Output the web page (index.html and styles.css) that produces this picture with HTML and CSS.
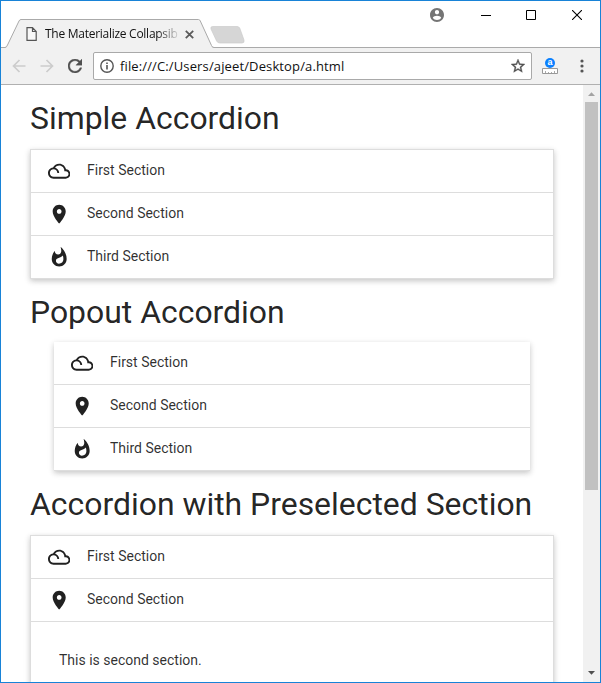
FILE: index.html
```html
<!DOCTYPE html>
<html lang="en">
<head>
<meta charset="utf-8">
<title>The Materialize Collapsible</title>
<link rel="stylesheet" href="styles.css">
</head>
<body>
<svg class="sprites" aria-hidden="true">
  <symbol id="cloud" viewBox="0 0 24 24"><path d="M19.35 10.04C18.67 6.59 15.64 4 12 4 9.11 4 6.61 5.64 5.36 8.04 2.35 8.36 0 10.9 0 14c0 3.31 2.69 6 6 6h13c2.76 0 5-2.24 5-5 0-2.64-2.05-4.78-4.65-4.96zM19 18H6c-2.21 0-4-1.79-4-4s1.79-4 4-4 4 1.79 4 4h2c0-2.76-1.86-5.08-4.4-5.78C8.61 6.88 10.2 6 12 6c3.03 0 5.5 2.47 5.5 5.5v.5H19c1.65 0 3 1.35 3 3s-1.35 3-3 3z"/></symbol>
  <symbol id="place" viewBox="0 0 24 24"><path d="M12 2C8.13 2 5 5.13 5 9c0 5.25 7 13 7 13s7-7.75 7-13c0-3.87-3.13-7-7-7zm0 9.5c-1.38 0-2.5-1.12-2.5-2.5s1.12-2.5 2.5-2.5 2.5 1.12 2.5 2.5-1.12 2.5-2.5 2.5z"/></symbol>
  <symbol id="hot" viewBox="0 0 24 24"><path d="M13.5.67s.74 2.65.74 4.8c0 2.06-1.35 3.73-3.41 3.73-2.07 0-3.63-1.67-3.63-3.73l.03-.36C5.21 7.51 4 10.62 4 14c0 4.42 3.58 8 8 8s8-3.58 8-8C20 8.61 17.41 3.8 13.5.67zM11.71 19c-1.78 0-3.22-1.4-3.22-3.14 0-1.62 1.05-2.76 2.81-3.12 1.77-.36 3.6-1.21 4.62-2.58.39 1.29.59 2.65.59 4.04 0 2.65-2.15 4.8-4.8 4.8z"/></symbol>
</svg>
<div class="window">
  <header class="tabstrip">
    <div class="tab">
      <svg class="tab-shape" width="245" height="30" viewBox="0 0 245 30"><path d="M0 28.5H5L18.5 1.5Q19 .5 20 .5H197.500Q198.500 .5 199 1.500L211.500 28.500H245V30H0z" fill="#f1f1f1"/><path d="M0 28.500H4Q5.500 28.500 6.500 26L18 2Q18.700 .5 20 .5H197.500Q198.700 .5 199.300 2L210.500 26.500Q211.300 28.500 213 28.500H245" fill="none" stroke="#aaa"/><path d="M211.500 7.500H236Q238 7.500 238.700 9L243 21Q243.700 24 241 24H219Q216.500 24 215.600 22L210 10Q209.300 7.500 211.500 7.500z" fill="#d6d6d6" stroke="#ccc" stroke-width=".7"/></svg>
      <svg class="file-icon" width="11" height="14" viewBox="0 0 11 14"><path d="M1 .7H6.500L10.200 4.500V13.300H1zM6.500 .7V4.500H10.200" fill="#f8f8f8" stroke="#555" stroke-width="1.200"/></svg>
      <span class="tab-title">The Materialize Collapsib</span>
      <svg class="tab-close" width="9" height="9" viewBox="0 0 9 9"><path d="M.8.8 8.200 8.200M8.200.8.8 8.200" stroke="#5a5a5a" stroke-width="1.800"/></svg>
    </div>
    <div class="controls">
      <svg class="user" width="14" height="14" viewBox="2 2 20 20"><path fill="#757575" d="M12 2C6.480 2 2 6.480 2 12s4.480 10 10 10 10-4.480 10-10S17.520 2 12 2zm0 3c1.660 0 3 1.340 3 3s-1.340 3-3 3-3-1.340-3-3 1.340-3 3-3zm0 14.200c-2.500 0-4.710-1.280-6-3.220.03-1.990 4-3.080 6-3.080 1.990 0 5.970 1.090 6 3.080-1.290 1.940-3.500 3.220-6 3.220z"/></svg>
      <svg width="10" height="10" viewBox="0 0 10 10"><path d="M0 5.500H10" stroke="#000"/></svg>
      <svg width="10" height="10" viewBox="0 0 10 10"><path d="M.5.5H9.500V9.500H.5z" fill="none" stroke="#000"/></svg>
      <svg class="close" width="10" height="10" viewBox="0 0 10 10"><path d="M0 0 10 10M10 0 0 10" stroke="#000" stroke-width="1.100"/></svg>
    </div>
  </header>
  <nav class="toolbar">
    <svg class="back" width="14" height="14" viewBox="0 0 14 14"><path d="M13.500 7H1.500M7.500 1 1.500 7 7.500 13" fill="none" stroke="#ccc" stroke-width="1.700"/></svg>
    <svg class="forward" width="14" height="14" viewBox="0 0 14 14"><path d="M.5 7H12.500M6.500 1 12.500 7 6.500 13" fill="none" stroke="#ccc" stroke-width="1.700"/></svg>
    <svg class="reload" width="14" height="14" viewBox="4 4 16 16"><path fill="#505050" stroke="#505050" stroke-width=".4" d="M17.650 6.350C16.200 4.900 14.210 4 12 4c-4.420 0-7.990 3.580-7.990 8s3.570 8 7.990 8c3.730 0 6.840-2.550 7.730-6h-2.080c-.82 2.330-3.040 4-5.650 4-3.310 0-6-2.690-6-6s2.690-6 6-6c1.660 0 3.140.69 4.220 1.780L13 11h7V4l-2.350 2.350z"/></svg>
    <div class="address">
      <svg width="14" height="14" viewBox="0 0 14 14"><circle cx="7" cy="7" r="6.200" fill="none" stroke="#555" stroke-width="1.400"/><path d="M7 6V10.500M7 3.500V5.100" stroke="#555" stroke-width="1.600"/></svg>
      <span class="url">file:///C:/Users/ajeet/Desktop/a.html</span>
      <svg class="star" width="14" height="14" viewBox="2 2 20 20"><path fill="#505050" stroke="#505050" stroke-width=".5" d="M22 9.240l-7.190-.62L12 2 9.190 8.630 2 9.240l5.460 4.730L5.820 21 12 17.270 18.180 21l-1.630-7.030L22 9.240zM12 15.400l-3.760 2.270 1-4.280-3.320-2.880 4.380-.38L12 6.100l1.710 4.040 4.380.38-3.320 2.880 1 4.280L12 15.400z"/></svg>
    </div>
    <div class="extension"><span class="badge">a</span><svg width="16" height="6" viewBox="0 0 16 6"><path d="M.5.5H15.500V5.500H.5z" fill="#fff" stroke="#999"/><path d="M3.500 3V5M6.500 4V5M9.500 4V5M12.500 3V5" stroke="#aaa"/></svg></div>
    <svg class="menu" width="4" height="14" viewBox="0 0 4 14"><g fill="#555"><circle cx="2" cy="2" r="1.600"/><circle cx="2" cy="7" r="1.600"/><circle cx="2" cy="12" r="1.600"/></g></svg>
  </nav>
  <div class="viewport">
    <main class="page">
      <h4>Simple Accordion</h4>
      <ul class="collapsible">
        <li><svg class="icon"><use href="#cloud"/></svg><span>First Section</span></li>
        <li><svg class="icon"><use href="#place"/></svg><span>Second Section</span></li>
        <li><svg class="icon"><use href="#hot"/></svg><span>Third Section</span></li>
      </ul>
      <h4>Popout Accordion</h4>
      <ul class="collapsible popout">
        <li><svg class="icon"><use href="#cloud"/></svg><span>First Section</span></li>
        <li><svg class="icon"><use href="#place"/></svg><span>Second Section</span></li>
        <li><svg class="icon"><use href="#hot"/></svg><span>Third Section</span></li>
      </ul>
      <h4>Accordion with Preselected Section</h4>
      <ul class="collapsible">
        <li><svg class="icon"><use href="#cloud"/></svg><span>First Section</span></li>
        <li><svg class="icon"><use href="#place"/></svg><span>Second Section</span></li>
        <li class="content"><span>This is second section.</span></li>
      </ul>
    </main>
    <div class="scrollbar">
      <svg width="17" height="17" viewBox="0 0 17 17"><path d="M5 11 8.500 7.300 12 11z" fill="#a3a3a3"/></svg>
      <div class="thumb"></div>
      <svg class="down" width="17" height="17" viewBox="0 0 17 17"><path d="M5 6H12L8.500 9.700z" fill="#505050"/></svg>
    </div>
  </div>
</div>
</body>
</html>
```
FILE: styles.css
```css
* { box-sizing: border-box; }
body { margin: 0; overflow: hidden; background: #fff; }
svg { display: block; flex: none; }
.sprites { display: none; }
.window {
  width: 601px;
  height: 683px;
  border: 1px solid #1883d7;
  display: flex;
  flex-direction: column;
  overflow: hidden;
  background: #fff;
}
.tabstrip {
  height: 47px;
  display: flex;
  justify-content: space-between;
  background: linear-gradient(#aaa, #aaa) 0 46px / 100% 1px no-repeat;
}
.tab {
  position: relative;
  width: 245px;
  height: 30px;
  margin-top: 18px;
  padding-left: 25px;
  display: flex;
  align-items: center;
  flex: none;
}
.tab-shape { position: absolute; left: 0; top: 0; }
.file-icon, .tab-title, .tab-close { position: relative; }
.tab-title {
  width: 135px;
  margin-left: 8px;
  overflow: hidden;
  white-space: nowrap;
  font: 12px/18px "Open Sans", sans-serif;
  letter-spacing: -0.27px;
  color: #111;
  mask-image: linear-gradient(90deg, #000 112px, transparent 136px);
}
.tab-close { margin-left: 5px; }
.controls { display: flex; align-items: center; height: 28px; padding-right: 18px; gap: 35px; }
.controls .user { margin-right: 2px; }
.controls .close { margin-left: 1px; }
.toolbar {
  height: 37px;
  background: #f1f1f1;
  border-bottom: 1px solid #b0b0b0;
  display: flex;
  align-items: center;
  padding-left: 11px;
}
.forward { margin-left: 14px; }
.reload { margin-left: 14px; }
.address {
  width: 439px;
  height: 28px;
  margin-left: 11px;
  padding: 0 6px;
  border: 1px solid #a9a9a9;
  border-radius: 2px;
  background: #fff;
  display: flex;
  align-items: center;
}
.url {
  margin-left: 6px;
  flex: 1;
  font: 13px/20px "Open Sans", sans-serif;
  letter-spacing: 0.13px;
  color: #111;
  white-space: nowrap;
}
.extension { width: 16px; margin-left: 10px; display: flex; flex-direction: column; align-items: center; }
.badge {
  width: 10px;
  height: 10px;
  border-radius: 50%;
  background: #0a80ff;
  color: #fff;
  font: bold 9px/8px "Liberation Sans", sans-serif;
  text-align: center;
}
.menu { margin-left: 22px; }
.viewport { height: 597px; display: flex; }
.page {
  width: 582px;
  padding: 16px 29px 0;
  overflow: hidden;
  font: 400 14px/21px Roboto, sans-serif;
  color: rgba(0, 0, 0, 0.87);
}
h4 { margin: 0 0 13px; font-size: 31.92px; line-height: 35px; font-weight: 400; white-space: nowrap; }
.collapsible {
  margin: 0 0 16px;
  padding: 0;
  list-style: none;
  border: 1px solid #ddd;
  border-bottom: 0;
  background: #fff;
  box-shadow: 0 2px 5px 0 rgba(0,0,0,.16), 0 2px 8px 0 rgba(0,0,0,.08);
}
.collapsible li {
  height: 43px;
  padding: 0 14px;
  border-bottom: 1px solid #ddd;
  display: flex;
  align-items: center;
}
.collapsible span { padding-bottom: 2px; color: rgba(0, 0, 0, 0.82); }
.icon { width: 22.4px; height: 22.4px; margin: 0 16.8px 0 2.8px; fill: #212121; }
.popout { margin: -1px 24px 16px; border: 0; }
.popout li { padding-left: 14px; }
.collapsible .content { height: 79px; padding: 0 28px; }
.scrollbar { width: 17px; background: #f1f1f1; display: flex; flex-direction: column; align-items: center; }
.thumb { width: 13px; height: 388px; background: #c1c1c1; }
.down { margin-top: auto; }
```
